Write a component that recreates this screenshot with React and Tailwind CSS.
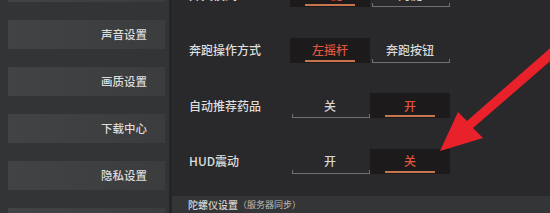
import React from 'react';

const menu = ['基础设置', '声音设置', '画质设置', '下载中心', '隐私设置', '其他设置'];

const rows = [
  { label: '开火模式', options: [{ text: '一键', on: true }, { text: '两键', on: false }] },
  { label: '奔跑操作方式', options: [{ text: '左摇杆', on: true }, { text: '奔跑按钮', on: false }] },
  { label: '自动推荐药品', options: [{ text: '关', on: false }, { text: '开', on: true }] },
  { label: 'HUD震动', options: [{ text: '开', on: false }, { text: '关', on: true }] },
];

const Option = ({ text, on }) =>
  on ? (
    <div className="relative flex h-[25px] w-[80px] items-center justify-center bg-[#1c1a1a] text-[12px] font-medium text-[#e0553e]">
      {text}
      <span className="absolute bottom-[1px] left-[15px] h-[2px] w-[50px] bg-[#c7744f]" />
    </div>
  ) : (
    <div className="relative flex h-[25px] w-[80px] items-center justify-center text-[12px] font-medium text-[#d8d8d8]">
      {text}
      <span className="absolute bottom-0 left-[2px] right-0 h-[4px] border-x border-b border-[#707173]" />
    </div>
  );

export default function App() {
  return (
    <div
      className="relative flex h-[213px] w-[550px] overflow-hidden bg-[#29292b]"
      style={{ fontFamily: '"Noto Sans CJK SC", "Noto Sans", sans-serif' }}
    >
      {/* sidebar */}
      <div className="w-[172px] shrink-0 border-r-[3px] border-[#252527] bg-[#333436] pl-[8px]">
        <div className="mt-[-27px] flex flex-col gap-[18px]">
          {menu.map((m) => (
            <div
              key={m}
              className="flex h-[29px] w-[157px] items-center justify-end bg-gradient-to-r from-[#424345] to-[#3b3c3e] pr-[18px] text-[11.5px] font-medium text-[#dcdcdc]"
            >
              {m}
            </div>
          ))}
        </div>
      </div>

      {/* content */}
      <div className="flex flex-1 flex-col">
        <div className="mt-[-33px] flex flex-col pl-[17px]">
          {rows.map((r) => (
            <div key={r.label} className="flex h-[55.5px] items-center">
              <div className="w-[101px] text-[12px] font-medium text-[#dedede]">{r.label}</div>
              {r.options.map((o) => (
                <Option key={o.text} {...o} />
              ))}
            </div>
          ))}
        </div>
        <div className="mt-[7px] flex h-[20px] items-center bg-[#343537] pl-[16px]">
          <span className="text-[10px] font-medium text-[#d4d4d4]">陀螺仪设置</span>
          <span className="text-[9px] text-[#bdbdbd]">（服务器同步）</span>
        </div>
      </div>

      {/* red arrow */}
      <svg className="pointer-events-none absolute inset-0" width="550" height="213" viewBox="0 0 550 213">
        <polygon
          points="557,42 467,121 458,112 440,151 483,138 473,128 563,50"
          fill="#e8212b"
        />
      </svg>
    </div>
  );
}
